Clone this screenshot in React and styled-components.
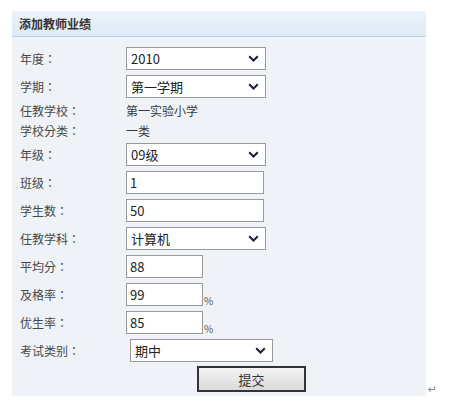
import React from 'react';
import styled, { createGlobalStyle } from 'styled-components';

const GlobalStyle = createGlobalStyle`
  body {
    margin: 0;
    background: #ffffff;
    font-family: "Noto Sans CJK SC", "Noto Sans", "DejaVu Sans", sans-serif;
  }
`;

const Page = styled.div`
  display: flex;
  align-items: flex-end;
  padding: 11px 0 0 12px;
`;

const Panel = styled.div`
  width: 414px;
  background: #eff3f8;
  padding-bottom: 4px;
`;

const Header = styled.div`
  height: 25px;
  display: flex;
  align-items: center;
  padding-left: 7px;
  background: linear-gradient(#ecf3fa, #dde9f5);
  border-bottom: 1px solid #b3d2ee;
  font-size: 12px;
  font-weight: bold;
  color: #333;
`;

const Form = styled.div`
  display: flex;
  flex-direction: column;
  gap: 5px;
  padding: 10px 0 0 8px;
`;

const Row = styled.div`
  display: flex;
  align-items: center;
  height: ${(p) => (p.$text ? 15 : 23)}px;
`;

const Label = styled.div`
  width: ${(p) => 106 + (p.$offset || 0)}px;
  flex: none;
  font-family: "Noto Sans CJK TC", "Noto Sans CJK SC", sans-serif;
  font-size: 12px;
  color: #484848;
`;

const Value = styled.div`
  font-size: 12px;
  color: #3a3a3a;
`;

const SelectBox = styled.div`
  box-sizing: border-box;
  width: ${(p) => p.$w}px;
  height: 23px;
  display: flex;
  align-items: center;
  justify-content: space-between;
  padding: 0 6px 0 4px;
  background: #fff;
  border: 1px solid #999;
  font-size: 13px;
  color: #222;
`;

const Input = styled.div`
  box-sizing: border-box;
  width: ${(p) => p.$w}px;
  height: 23px;
  display: flex;
  align-items: center;
  padding-left: 3px;
  background: #fff;
  border: 1px solid #999;
  font-size: 13px;
  color: #222;
`;

const Unit = styled.span`
  align-self: flex-end;
  margin-left: 1px;
  font-size: 10px;
  color: #555;
  line-height: 14px;
  transform: translateY(2px);
`;

const Submit = styled.div`
  box-sizing: border-box;
  width: 109px;
  height: 26px;
  margin: -1px 0 0 177px;
  display: flex;
  align-items: center;
  justify-content: center;
  border: 2px solid #333;
  background: linear-gradient(#f4f4f4, #dadada);
  font-size: 13px;
  color: #333;
`;

const Mark = styled.span`
  font-size: 11px;
  color: #888;
  margin: 0 0 2px 2px;
  line-height: 12px;
`;

const Chevron = () => (
  <svg width="11" height="7" viewBox="0 0 11 7">
    <path d="M1.2 1.2 L5.5 5.5 L9.8 1.2" fill="none" stroke="#1a2233" strokeWidth="2" />
  </svg>
);

const Select = ({ w, value }) => (
  <SelectBox $w={w}>
    <span>{value}</span>
    <Chevron />
  </SelectBox>
);

export default function App() {
  return (
    <>
      <GlobalStyle />
      <Page>
        <Panel>
          <Header>添加教师业绩</Header>
          <Form>
            <Row>
              <Label>年度：</Label>
              <Select w={140} value="2010" />
            </Row>
            <Row>
              <Label>学期：</Label>
              <Select w={140} value="第一学期" />
            </Row>
            <Row $text>
              <Label>任教学校：</Label>
              <Value>第一实验小学</Value>
            </Row>
            <Row $text>
              <Label>学校分类：</Label>
              <Value>一类</Value>
            </Row>
            <Row>
              <Label>年级：</Label>
              <Select w={140} value="09级" />
            </Row>
            <Row>
              <Label>班级：</Label>
              <Input $w={138}>1</Input>
            </Row>
            <Row>
              <Label>学生数：</Label>
              <Input $w={138}>50</Input>
            </Row>
            <Row>
              <Label>任教学科：</Label>
              <Select w={140} value="计算机" />
            </Row>
            <Row>
              <Label>平均分：</Label>
              <Input $w={77}>88</Input>
            </Row>
            <Row>
              <Label>及格率：</Label>
              <Input $w={77}>99</Input>
              <Unit>%</Unit>
            </Row>
            <Row>
              <Label>优生率：</Label>
              <Input $w={77}>85</Input>
              <Unit>%</Unit>
            </Row>
            <Row>
              <Label $offset={4}>考试类别：</Label>
              <Select w={143} value="期中" />
            </Row>
            <Submit>提交</Submit>
          </Form>
        </Panel>
        <Mark>↵</Mark>
      </Page>
    </>
  );
}
